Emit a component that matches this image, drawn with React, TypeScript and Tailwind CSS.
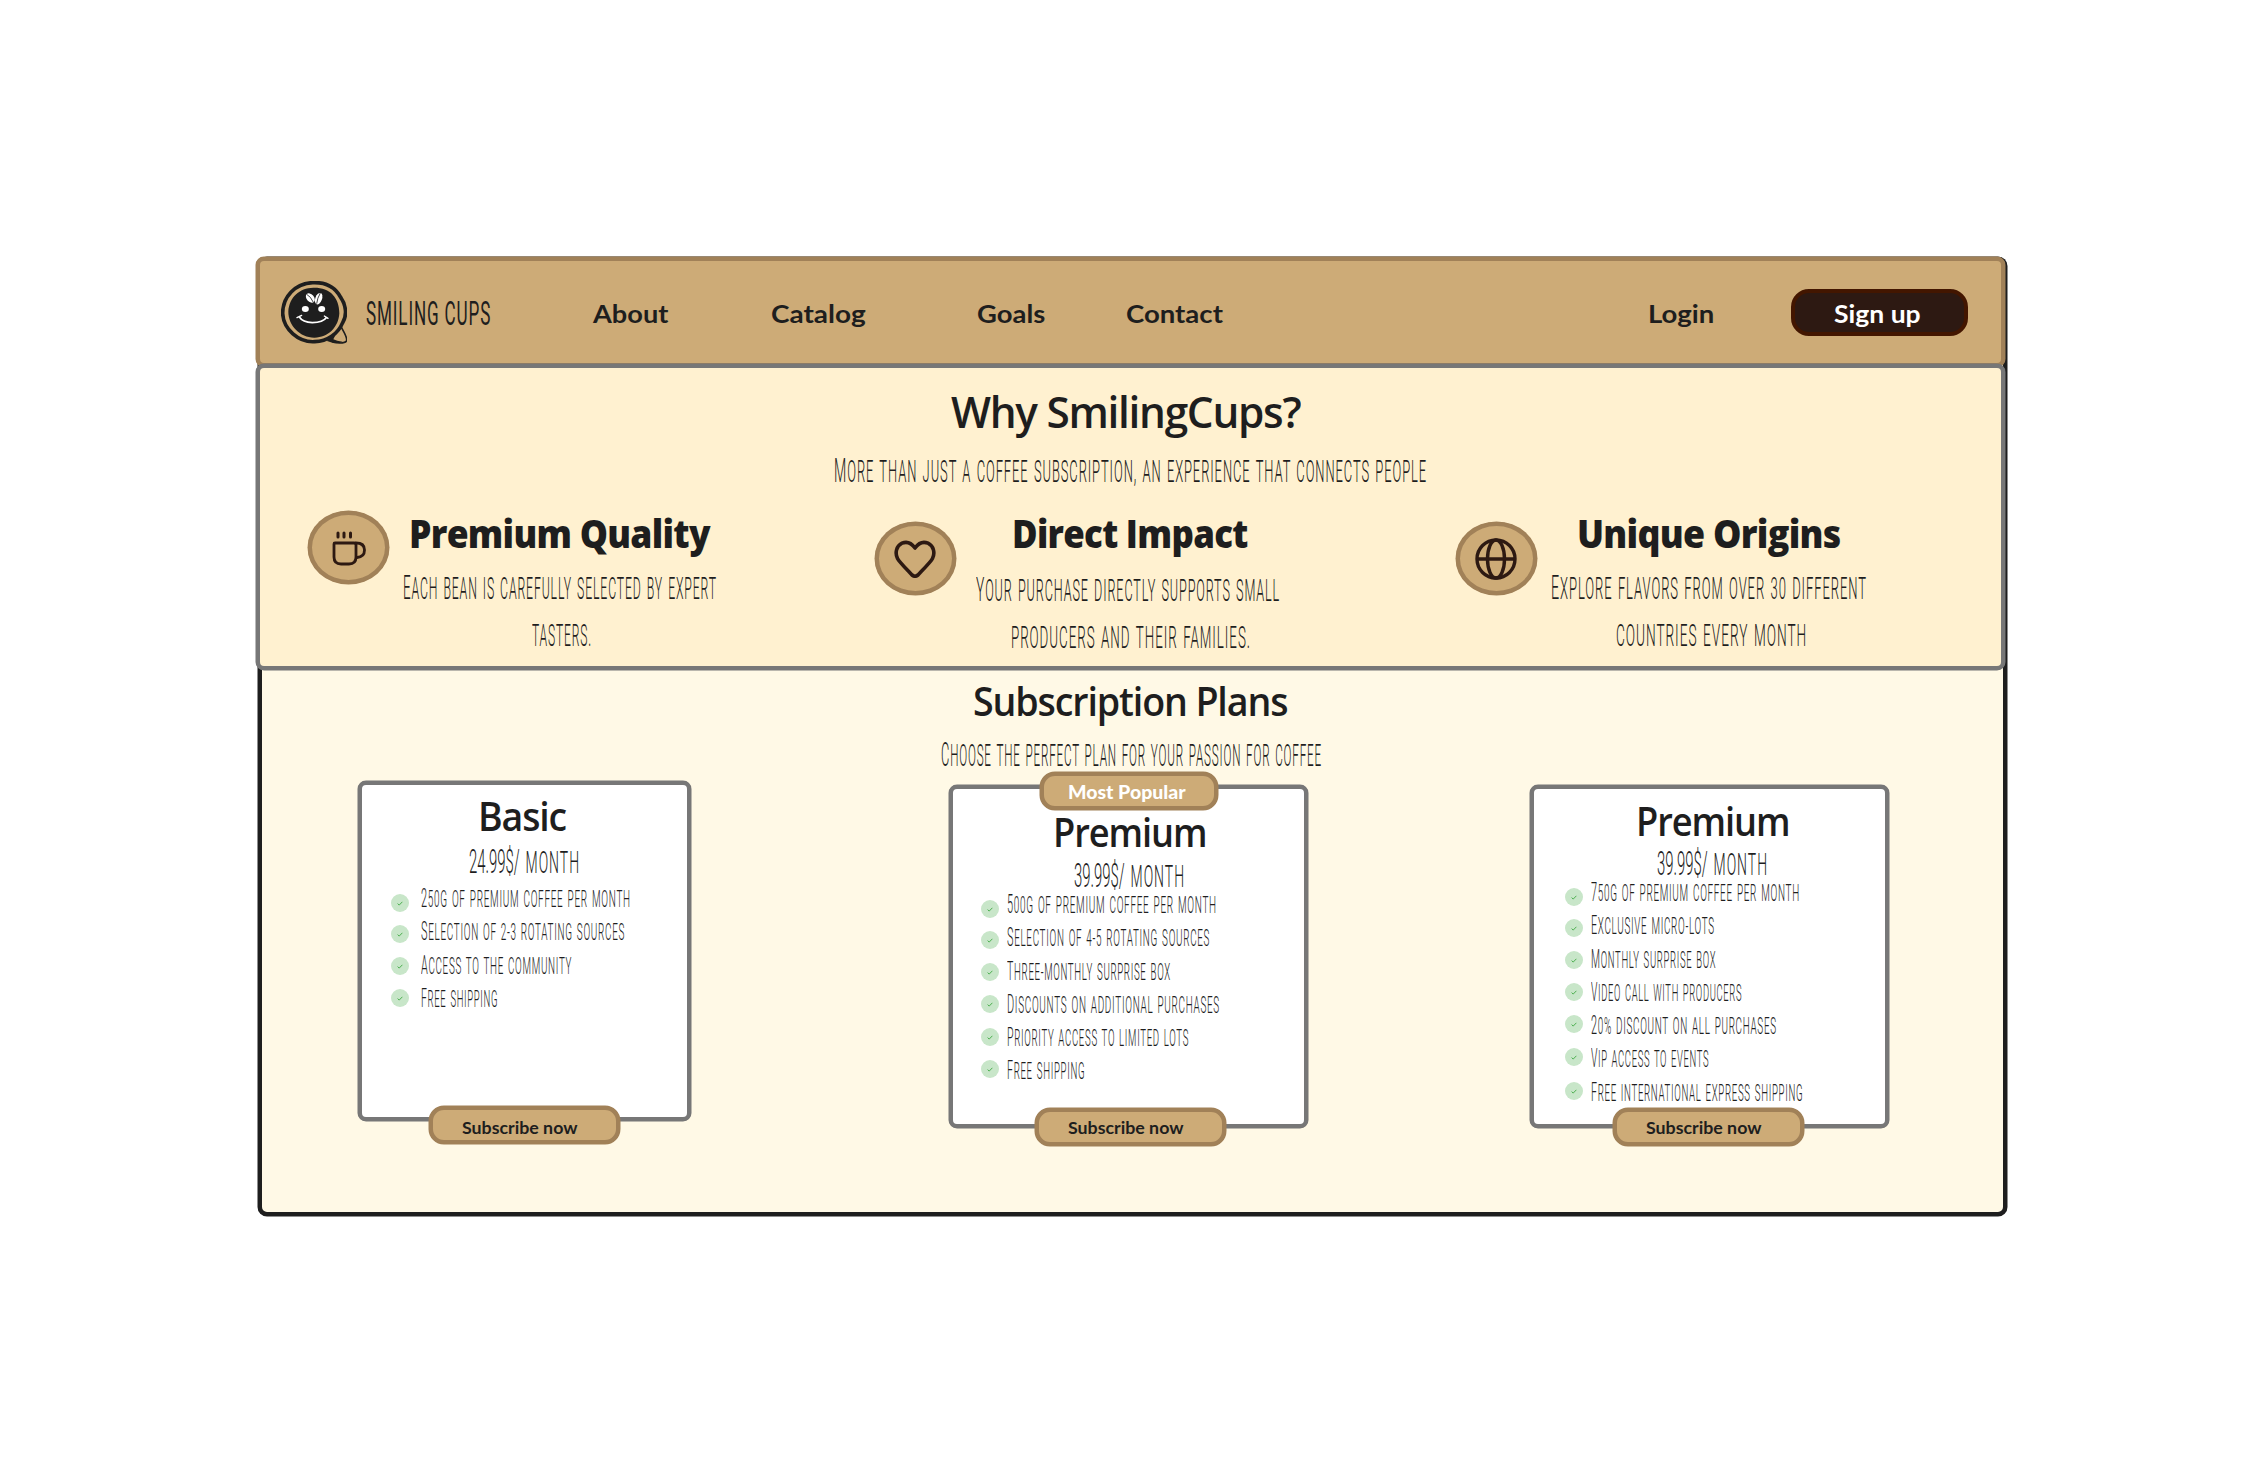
import { useLayoutEffect, useRef, useState } from "react";
import type { ReactNode } from "react";

const THIN = "font-['Roboto'] font-light uppercase tracking-[0.07em] [word-spacing:0.1em]";
const TITLE = "font-['Open_Sans'] font-[650] tracking-[-0.03em]";
const HEAVY = "font-['Open_Sans'] font-extrabold text-[39px] leading-none tracking-[-0.02em]";
const ROUND = "font-['Lato'] font-bold";
const EDGE_TAN = "border-4 border-[#a18158] shadow-[0_0_0_0.5px_#a18158]";
const EDGE_GREY = "border-4 border-[#777777] shadow-[0_0_0_0.5px_#777777]";

/* One line of text, condensed or stretched horizontally to a given width. */
function Line({ w, className = "", inner = "", children }: { w: number; className?: string; inner?: string; children: ReactNode }) {
  const ref = useRef<HTMLSpanElement>(null);
  const [scale, setScale] = useState(1);
  useLayoutEffect(() => {
    if (ref.current) setScale(w / ref.current.offsetWidth);
  }, [w]);
  return (
    <div className={`shrink-0 ${className}`} style={{ width: w }}>
      <span ref={ref} className={`inline-block origin-left whitespace-nowrap ${inner}`} style={{ transform: `scaleX(${scale})` }}>
        {children}
      </span>
    </div>
  );
}

/* Thin capitals with a slightly taller initial. */
function Hand({ w, className = "", children }: { w: number; className?: string; children: string }) {
  return (
    <Line w={w} className={className} inner={`${THIN} first-letter:text-[1.1em]`}>
      {children}
    </Line>
  );
}

function Logo() {
  return (
    <svg viewBox="33 33 198 189" className="ml-[21px] h-[63px] w-[66px] shrink-0">
      <path d="M214 172 C222 186 232 202 230 212 C226 222 196 221 172 211" fill="none" stroke="#1e1e1e" strokeWidth="5" />
      <path d="M168 207 L196 196 L190 208 Q200 214 218 215 Q208 221 190 219 Z" fill="#1e1e1e" />
      <path d="M128 38 C170 36 196 52 212 82 C228 104 232 136 218 158 C204 192 172 214 134 215 C86 218 40 178 38 130 C38 80 76 40 128 38 Z" fill="none" stroke="#1e1e1e" strokeWidth="11" />
      <path d="M130 53 C180 52 208 82 208 130 C206 172 174 203 134 203 C92 204 54 168 55 124 C58 82 88 54 130 53 Z" fill="#1e1e1e" />
      <ellipse cx="121" cy="84" rx="11" ry="16" transform="rotate(-42 121 84)" fill="#fff" />
      <ellipse cx="146" cy="86" rx="10" ry="18" transform="rotate(20 146 86)" fill="#fff" />
      <path d="M110 73 Q122 79 130 97 M151 69 Q142 84 140 101" fill="none" stroke="#1e1e1e" strokeWidth="2.5" />
      <ellipse cx="106" cy="117" rx="10.5" ry="9" fill="#fff" />
      <ellipse cx="155" cy="117" rx="10.5" ry="9" fill="#fff" />
      <path d="M88 141 Q98 157 127 158 Q159 158 170 142" fill="none" stroke="#fff" strokeWidth="5" />
      <path d="M81 143 L95 136 M163 138 L174 145" stroke="#fff" strokeWidth="4" strokeLinecap="round" />
    </svg>
  );
}

function Cup() {
  return (
    <svg viewBox="0 0 34 36" className="h-[36px] w-[34px]" fill="none" stroke="#2d1912" strokeWidth="2.8" strokeLinecap="round">
      <path d="M6 3 V7 M12 3 V7 M18.5 3 V7" strokeWidth="3" />
      <path d="M3 13 H22 Q24 13 24 15 V27 Q24 34 17 34 H9 Q2 34 2 27 V14 Q2 13 3 13 Z" />
      <path d="M24 13 Q32.5 13 32.5 20 Q32.5 27 25 27.5" />
    </svg>
  );
}

function HeartIcon() {
  return (
    <svg viewBox="0 0 42 38" className="mr-[1px] h-[38px] w-[42px]" fill="none" stroke="#2d1912" strokeWidth="3.6" strokeLinejoin="round">
      <path d="M21 8 C17 2.5 12 1.5 8 3.2 C2.2 6 0.8 13 3.5 18.5 C5 21.5 9 25.5 18 35 Q21 37.5 24 35 C33 25.5 37 21.5 38.5 18.5 C41.2 13 39.8 6 34 3.2 C30 1.5 25 2.5 21 8 Z" />
    </svg>
  );
}

function Globe() {
  return (
    <svg viewBox="0 0 42 42" className="mr-[1px] h-[42px] w-[42px]" fill="none" stroke="#2d1912" strokeWidth="3.4">
      <circle cx="21" cy="21" r="19" />
      <ellipse cx="21" cy="21" rx="8.5" ry="19" />
      <path d="M2 21 H40" />
    </svg>
  );
}

function Disc({ className = "", children }: { className?: string; children: ReactNode }) {
  return (
    <div className={`flex h-[73px] w-[81px] shrink-0 items-center justify-center rounded-[50%] bg-[#cdab77] ${EDGE_TAN} ${className}`}>
      {children}
    </div>
  );
}

type Item = [string, number];

function Plan({ className, items, gaps, head, listClass, textClass }: { className: string; items: Item[]; gaps: number[]; head: ReactNode; listClass: string; textClass: string }) {
  return (
    <div className={`relative shrink-0 rounded-[8px] bg-white ${EDGE_GREY} ${className}`}>
      {head}
      <div className={`flex ${listClass}`}>
        <div className="w-[18px] shrink-0 pt-[12px]">
          {items.map(([t], i) => (
            <div key={t} className="flex h-[18px] w-[18px] items-center justify-center rounded-full bg-[#c8e6c9]" style={{ marginTop: gaps[i] }}>
              <svg viewBox="0 0 6 5" className="h-[5px] w-[6px]" fill="none" stroke="#4caf50" strokeWidth="1">
                <path d="M0.6 2.6 L2.2 4.1 L5.4 0.8" />
              </svg>
            </div>
          ))}
        </div>
        <div className={textClass}>
          {items.map(([t, w]) => (
            <Hand key={t} w={w} className="h-[33.3px] text-[23px] leading-[33px]">{t}</Hand>
          ))}
        </div>
      </div>
    </div>
  );
}

function Price({ amount, className }: { amount: string; className: string }) {
  return (
    <Line w={111} className={`h-[32px] text-[31px] leading-[32px] ${className}`} inner={THIN}>
      <span className="text-[33px] tracking-normal">{amount}</span> month
    </Line>
  );
}

function Subscribe({ className, textClass }: { className: string; textClass: string }) {
  return (
    <button className={`absolute flex h-[38px] w-[191px] rounded-[15px] bg-[#cdab77] pl-[29px] ${EDGE_TAN} ${className}`}>
      <Line w={115} className={`${ROUND} ${textClass} text-left text-[17px] leading-[17px]`}>Subscribe now</Line>
    </button>
  );
}

export default function App() {
  return (
    <div className="h-[1472px] w-[2264px] overflow-hidden bg-white pt-[257px] pl-[258px] text-[#1e1e1e]">
      <main className="h-[959px] w-[1749px] rounded-[9px] border-4 border-[#1e1e1e] bg-[#fff9e6] shadow-[0_0_0_0.5px_#1e1e1e]">
        <header className={`-mt-[4px] -ml-[6px] flex h-[110px] w-[1749px] items-center rounded-[8px] bg-[#cdab77] ${EDGE_TAN}`}>
          <Logo />
          <Line w={125} className="mt-[1px] ml-[19px] text-[33px] leading-none" inner="font-['Roboto'] tracking-[0.05em]">SMILING CUPS</Line>
          <nav className={`flex ${ROUND} mt-[2px] text-[25px] leading-none`}>
            <Line w={75} className="ml-[102px]">About</Line>
            <Line w={95} className="ml-[103px]">Catalog</Line>
            <Line w={68} className="ml-[111px]">Goals</Line>
            <Line w={97} className="ml-[81px]">Contact</Line>
            <Line w={66} className="ml-[425px]">Login</Line>
          </nav>
          <button className="ml-[77px] flex h-[47px] w-[177px] items-center rounded-[18px] border-4 border-[#431600] bg-[#2d1912] pl-[39px] text-white">
            <Line w={87} className={`${ROUND} mt-[2px] text-left text-[25px] leading-none`}>Sign up</Line>
          </button>
        </header>

        <section className={`relative -mt-[3px] -ml-[6px] flex h-[306px] w-[1749px] flex-col items-center rounded-[8px] bg-[#fff1d0] ${EDGE_GREY}`}>
          <Line w={349} className={`${TITLE} mt-[21px] mr-[10px] text-[44px] leading-none`}>Why SmilingCups?</Line>
          <Hand w={593} className="mt-[21px] mr-[1px] h-[32px] text-[31px] leading-[32px]">More than just a coffee subscription, an experience that connects people</Hand>
          <div className="mt-[25px] flex w-full pl-[48px]">
            <div className="flex w-[567px] shrink-0">
              <Disc><Cup /></Disc>
              <div className="mt-[2px] ml-[14px] flex w-[314px] flex-col items-center">
                <Line w={301} className={`${HEAVY} mr-[1px]`}>Premium Quality</Line>
                <Hand w={314} className="mt-[12px] h-[47px] text-[31px] leading-[47px]">Each bean is carefully selected by expert</Hand>
                <Line w={60} className="ml-[4px] h-[47px] text-[31px] leading-[47px]" inner={THIN}>tasters.</Line>
              </div>
            </div>
            <div className="flex w-[581px] shrink-0">
              <Disc className="mt-[11px]"><HeartIcon /></Disc>
              <div className="mt-[2px] ml-[20px] flex w-[304px] flex-col items-center">
                <Line w={236} className={`${HEAVY} ml-[3px]`}>Direct Impact</Line>
                <Hand w={304} className="mt-[14px] h-[47px] text-[31px] leading-[47px]">Your purchase directly supports small</Hand>
                <Line w={240} className="ml-[5px] h-[47px] text-[31px] leading-[47px]" inner={THIN}>producers and their families.</Line>
              </div>
            </div>
            <div className="flex shrink-0">
              <Disc className="mt-[11px]"><Globe /></Disc>
              <div className="mt-[2px] ml-[14px] flex w-[316px] flex-col items-center">
                <Line w={264} className={`${HEAVY} mr-[1px]`}>Unique Origins</Line>
                <Hand w={316} className="mt-[12px] h-[47px] text-[31px] leading-[47px]">Explore flavors from over 30 different</Hand>
                <Line w={191} className="ml-[5px] h-[47px] text-[31px] leading-[47px]" inner={THIN}>countries every month</Line>
              </div>
            </div>
          </div>
        </section>

        <section className="flex flex-col items-center">
          <Line w={314} className={`${TITLE} mt-[11px] mr-[6px] text-[40px] leading-none`}>Subscription Plans</Line>
          <Hand w={381} className="mt-[17px] mr-[3px] h-[32px] text-[31px] leading-[32px]">Choose the perfect plan for your passion for coffee</Hand>
          <div className="flex w-full items-start pl-[96px]">
            <Plan
              className="mt-[11px] h-[340px] w-[333px]"
              head={
                <>
                  <Line w={88} className={`${TITLE} mt-[11px] ml-[116px] text-[40px] leading-none`}>Basic</Line>
                  <Price amount="24.99$/" className="mt-[9px] ml-[107px]" />
                </>
              }
              listClass="mt-[5px] ml-[29px]"
              textClass="ml-[12px]"
              gaps={[0, 13, 14, 14]}
              items={[
                ["250g of premium coffee per month", 210],
                ["Selection of 2-3 rotating sources", 204],
                ["Access to the community", 151],
                ["Free shipping", 77],
              ]}
            />
            <Plan
              className="mt-[15px] ml-[258px] h-[343px] w-[359px]"
              head={
                <>
                  <div className={`absolute -top-[17px] left-[87px] flex h-[38px] w-[178px] rounded-[15px] bg-[#cdab77] pl-[24px] ${EDGE_TAN}`}>
                    <Line w={118} className="mt-[8px] font-['Lato'] text-[18px] leading-[17px] font-black text-white">Most Popular</Line>
                  </div>
                  <Line w={153} className={`${TITLE} mt-[23px] ml-[100px] text-[40px] leading-none`}>Premium</Line>
                  <Price amount="39.99$/" className="mt-[7px] ml-[121px]" />
                </>
              }
              listClass="-mt-[3px] ml-[28px]"
              textClass="ml-[8px]"
              gaps={[0, 13, 14, 14, 15, 14]}
              items={[
                ["500g of premium coffee per month", 210],
                ["Selection of 4-5 rotating sources", 203],
                ["Three-monthly surprise box", 164],
                ["Discounts on additional purchases", 213],
                ["Priority access to limited lots", 182],
                ["Free shipping", 78],
              ]}
            />
            <Plan
              className="mt-[15px] ml-[222px] h-[343px] w-[359px]"
              head={
                <>
                  <Line w={153} className={`${TITLE} mt-[12px] ml-[102px] text-[40px] leading-none`}>Premium</Line>
                  <Price amount="39.99$/" className="mt-[6px] ml-[123px]" />
                </>
              }
              listClass="-mt-[3px] ml-[31px]"
              textClass="ml-[8px]"
              gaps={[0, 13, 14, 14, 14, 15, 16]}
              items={[
                ["750g of premium coffee per month", 209],
                ["Exclusive micro-lots", 124],
                ["Monthly surprise box", 125],
                ["Video call with producers", 151],
                ["20% discount on all purchases", 186],
                ["VIP access to events", 118],
                ["Free international express shipping", 212],
              ]}
            />
          </div>
        </section>
      </main>
      <Subscribe className="top-[1106px] left-[429px]" textClass="mt-[9px]" />
      <Subscribe className="top-[1108px] left-[1035px]" textClass="mt-[7px]" />
      <Subscribe className="top-[1108px] left-[1613px]" textClass="mt-[7px]" />
    </div>
  );
}
